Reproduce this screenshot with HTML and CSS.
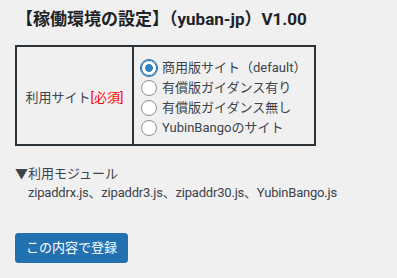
FILE: index.html
```html
<!DOCTYPE html>
<html lang="ja">
<head>
<meta charset="utf-8">
<link rel="stylesheet" href="styles.css">
</head>
<body>
<div class="wrap">
  <h2 class="title">【稼働環境の設定】（yuban-jp）V1.00</h2>
  <table class="form">
    <tr>
      <td class="label">利用サイト<span class="req">[必須]</span></td>
      <td class="options">
        <label class="opt"><input type="radio" name="site" checked><span>商用版サイト（default）</span></label>
        <label class="opt"><input type="radio" name="site"><span>有償版ガイダンス有り</span></label>
        <label class="opt"><input type="radio" name="site"><span>有償版ガイダンス無し</span></label>
        <label class="opt"><input type="radio" name="site"><span>YubinBangoのサイト</span></label>
      </td>
    </tr>
  </table>
  <div class="modules">
    <div>▼利用モジュール</div>
    <div class="mod-list">zipaddrx.js、zipaddr3.js、zipaddr30.js、YubinBango.js</div>
  </div>
  <button class="btn" type="button">この内容で登録</button>
</div>
</body>
</html>
```

FILE: styles.css
```css
html, body {
  margin: 0;
  background: #f0f0f1;
}
body {
  font-family: Roboto, "Noto Sans CJK JP", sans-serif;
  font-size: 13px;
  color: #3c434a;
}
.wrap {
  padding: 8px 0 0 15px;
}
.title {
  margin: 0 0 0 1px;
  font-size: 17px;
  line-height: 22px;
  font-weight: 700;
  color: #1d2327;
}
.form {
  margin-top: 15px;
  border-collapse: separate;
  border-spacing: 0;
  border: 2px solid #2c3338;
}
.form td {
  padding: 11px 0 6px 0;
  vertical-align: middle;
}
.label {
  width: 115px;
  text-align: center;
  border-right: 2px solid #2c3338;
  line-height: 20px;
}
.req {
  color: #ff0000;
}
.options {
  width: 173px;
  padding-left: 7px !important;
}
.opt {
  display: flex;
  align-items: center;
  gap: 5px;
  height: 20px;
  line-height: 20px;
  white-space: nowrap;
}
.opt input {
  appearance: none;
  -webkit-appearance: none;
  margin: 0;
  width: 16px;
  height: 16px;
  border: 1px solid #8c8f94;
  border-radius: 50%;
  background: #fff;
  box-sizing: border-box;
  flex: none;
}
.opt input:checked {
  border-color: #2271b1;
  box-shadow: 0 0 0 1px #2271b1;
  background: radial-gradient(circle, #3582c4 0 3.6px, #fff 4.2px);
}
.modules {
  margin-top: 18px;
  line-height: 19px;
}
.mod-list {
  padding-left: 13px;
  letter-spacing: -0.2px;
}
.btn {
  display: block;
  margin-top: 31px;
  height: 30px;
  padding: 0 10px;
  border: 1px solid #2271b1;
  border-radius: 3px;
  background: #2271b1;
  color: #fff;
  font-family: inherit;
  font-size: 13px;
  line-height: 28px;
}
```
